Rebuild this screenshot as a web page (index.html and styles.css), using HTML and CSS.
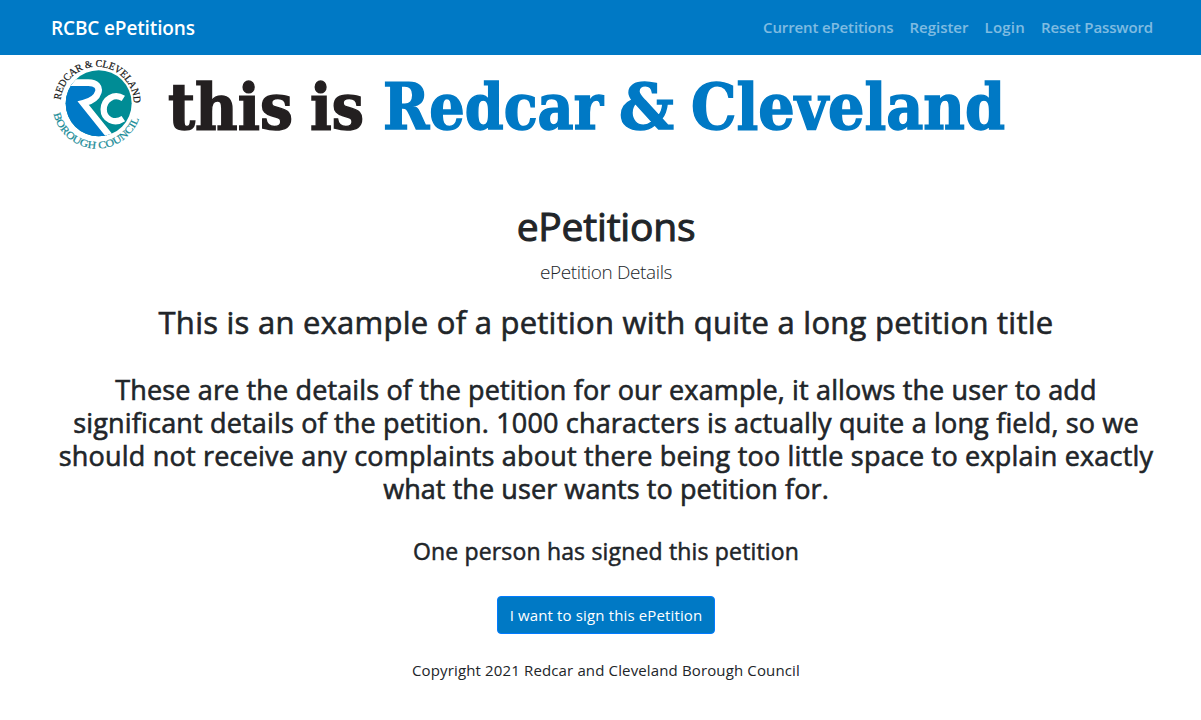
FILE: index.html
```html
<!DOCTYPE html>
<html lang="en">
<head>
<meta charset="utf-8">
<title>RCBC ePetitions</title>
<link rel="stylesheet" href="styles.css">
</head>
<body>
<header class="navbar">
  <a class="brand">RCBC ePetitions</a>
  <nav class="links">
    <a class="link l1">Current ePetitions</a>
    <a class="link l2">Register</a>
    <a class="link l3">Login</a>
    <a class="link l4">Reset Password</a>
  </nav>
</header>
<div class="banner">
  <svg class="logo" viewBox="0 0 360 330" role="img" aria-label="Redcar and Cleveland Borough Council">
    <defs>
      <path id="arc-top" d="M62 150A110 110 0 0 1 281 150L283 175" />
      <path id="arc-bottom" d="M41 191A133 133 0 0 0 301 191" />
      <clipPath id="disc"><circle cx="176" cy="160" r="99"/></clipPath>
    </defs>
    <g clip-path="url(#disc)">
      <rect x="70" y="55" width="210" height="210" fill="#008c95"/>
      <path d="M70 98H150C178 98 190 108 186 126C182 145 165 156 140 164L215 265H70Z" fill="#0079c7"/>
      <path d="M70 98H145C170 98 179 112 175 126C170 144 150 155 130 160L212 262" fill="none" stroke="#fff" stroke-width="20"/>
      <path d="M250 145C222 128 192 148 191 178C191 208 223 224 250 206" fill="none" stroke="#fff" stroke-width="19"/>
    </g>
    <text class="ring dark"><textPath href="#arc-top" textLength="334" lengthAdjust="spacingAndGlyphs">REDCAR &amp; CLEVELAND</textPath></text>
    <text class="ring teal"><textPath href="#arc-bottom" textLength="345" lengthAdjust="spacingAndGlyphs">BOROUGH COUNCIL</textPath></text>
  </svg>
  <svg class="wordmark" viewBox="160 55 860 100">
    <g class="word black">
      <text x="168" y="129" textLength="125" lengthAdjust="spacingAndGlyphs">this</text>
      <text x="310" y="129" textLength="54" lengthAdjust="spacingAndGlyphs">is</text>
    </g>
    <g class="word blue">
      <text x="383" y="129" textLength="220" lengthAdjust="spacingAndGlyphs">Redcar</text>
      <text x="619" y="129" textLength="55" lengthAdjust="spacingAndGlyphs">&amp;</text>
      <text x="691" y="129" textLength="314" lengthAdjust="spacingAndGlyphs">Cleveland</text>
    </g>
  </svg>
</div>
<main class="content">
  <h1 class="title">ePetitions</h1>
  <p class="lead">ePetition Details</p>
  <h2 class="petition">This is an example of a petition with quite a long petition title</h2>
  <h3 class="details">
    <span class="line d1">These are the details of the petition for our example, it allows the user to add</span>
    <span class="line d2">significant details of the petition. 1000 characters is actually quite a long field, so we</span>
    <span class="line d3">should not receive any complaints about there being too little space to explain exactly</span>
    <span class="line d4">what the user wants to petition for.</span>
  </h3>
  <h4 class="signed">One person has signed this petition</h4>
  <button class="sign"><span class="sign-text">I want to sign this ePetition</span></button>
  <p class="copyright">Copyright 2021 Redcar and Cleveland Borough Council</p>
</main>
</body>
</html>
```
FILE: styles.css
```css
* { box-sizing: border-box; }
body { margin: 0; width: 1201px; height: 720px; overflow: hidden; background: #fff; color: #212529; font-family: "Open Sans", "Noto Sans", sans-serif; font-size: 16px; line-height: 24px; }
.navbar { height: 55px; padding: 0 48px 0 51px; background: #0079c5; display: flex; align-items: center; justify-content: space-between; white-space: nowrap; }
.brand { color: #fff; font-size: 19px; font-weight: 600; line-height: 30px; letter-spacing: -.13px; }
.links { display: flex; gap: 16px; padding-bottom: 2px; }
.link { color: rgba(255,255,255,.5); font-size: 15px; font-weight: 600; }
.l1, .l4 { letter-spacing: -.13px; }
.l3 { letter-spacing: .25px; }
.banner { height: 100px; display: flex; padding-left: 40px; }
.logo { width: 120px; height: 110px; margin-top: -5px; flex: none; }
.wordmark { width: 860px; height: 100px; flex: none; overflow: visible; }
.word { font: bold 63px "DejaVu Serif Condensed", "DejaVu Serif", serif; stroke-width: 1.4px; }
.black { fill: #231f20; stroke: #231f20; }
.blue { fill: #0079c5; stroke: #0079c5; }
.ring { font: 31px "Liberation Serif", serif; stroke-width: .6px; }
.dark { fill: #111; stroke: #111; }
.teal { fill: #178b97; stroke: #178b97; }
.content { width: 1110px; margin: 47px auto 0 51px; text-align: center; white-space: nowrap; }
.title, .petition, .details, .signed { font-weight: 400; -webkit-text-stroke: .6px #212529; }
.title { margin: 0 0 8px; font-size: 39px; line-height: 48px; letter-spacing: -.2px; -webkit-text-stroke-width: 1px; }
.lead { margin: 0 0 16px; font-size: 19px; line-height: 29px; font-weight: 300; letter-spacing: -.36px; }
.petition { margin: 0 0 32px; font-size: 31px; line-height: 38px; letter-spacing: .25px; }
.details { margin: 0 0 32px; font-size: 27px; line-height: 33px; }
.line { display: block; }
.d1 { letter-spacing: .14px; }
.d2 { letter-spacing: .17px; }
.d3 { letter-spacing: .2px; }
.d4 { letter-spacing: .08px; }
.signed { margin: 0 0 30px; font-size: 23px; line-height: 29px; letter-spacing: .17px; -webkit-text-stroke-width: .5px; }
.sign { display: block; width: 218px; height: 38px; margin: 0 auto 24px; padding: 0; border: 1px solid #007bff; border-radius: 4px; background: #0079c5; color: #fff; font: 15px/24px "Open Sans", sans-serif; letter-spacing: .14px; }
.copyright { margin: 0; font-size: 15px; line-height: 24px; letter-spacing: .14px; }
```
